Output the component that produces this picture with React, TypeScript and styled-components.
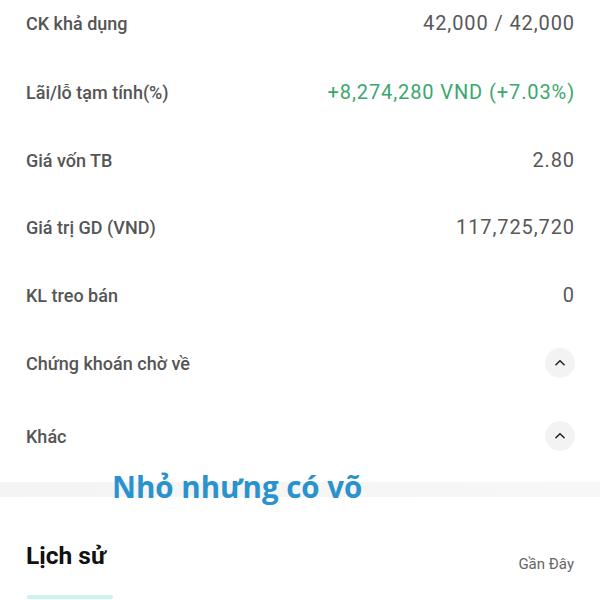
import React from 'react';
import styled, { createGlobalStyle } from 'styled-components';

const GlobalStyle = createGlobalStyle`
  html, body {
    margin: 0;
    padding: 0;
    background: #ffffff;
    overflow: hidden;
  }
  body {
    font-family: Roboto, 'Noto Sans', sans-serif;
  }
`;

const Page = styled.div`
  width: 600px;
  height: 600px;
  overflow: hidden;
  position: relative;
  background: #fff;
`;

const InfoList = styled.div`
  margin-top: -11px;
  padding: 0 26px 0 26px;
`;

const Row = styled.div<{ $h?: number }>`
  display: flex;
  align-items: center;
  justify-content: space-between;
  height: ${(p) => p.$h ?? 68}px;
`;

const Label = styled.span`
  font-size: 18px;
  font-weight: 500;
  color: #555;
`;

const Value = styled.span<{ $positive?: boolean }>`
  font-size: 20px;
  font-weight: 400;
  letter-spacing: 0.9px;
  margin-right: -1px;
  color: ${(p) => (p.$positive ? '#3aa76d' : '#585858')};
`;

const ToggleButton = styled.button`
  width: 30px;
  height: 30px;
  margin-right: -1px;
  border: none;
  border-radius: 50%;
  background: #f3f3f3;
  display: flex;
  align-items: center;
  justify-content: center;
  padding: 0;
`;

const Divider = styled.div`
  height: 15px;
  margin-top: 7px;
  background: linear-gradient(90deg, #f4f4f4, #f7f7f7);
  position: relative;
`;

const Watermark = styled.div`
  position: absolute;
  left: 112px;
  top: -16px;
  font-family: 'Open Sans', sans-serif;
  font-weight: 700;
  font-size: 29.5px;
  color: #2a92cc;
  white-space: nowrap;
`;

const HistorySection = styled.div`
  padding: 44px 26px 0 26px;
`;

const HistoryHeader = styled.div`
  display: flex;
  align-items: flex-end;
  justify-content: space-between;
`;

const HistoryTitle = styled.h2`
  margin: 0;
  font-size: 24.5px;
  font-weight: 700;
  color: #111;
`;

const RecentLink = styled.span`
  font-size: 15px;
  color: #666;
  margin-bottom: -3px;
`;

const TabIndicator = styled.div`
  width: 86px;
  height: 4px;
  margin-top: 25px;
  margin-left: 1px;
  border-radius: 2px;
  background: #c9f3ef;
`;

const ChevronUp = () => (
  <svg width="14" height="14" viewBox="0 0 24 24" fill="none" stroke="#222" strokeWidth="2.6" strokeLinecap="round" strokeLinejoin="round">
    <path d="M5 15l7-7 7 7" />
  </svg>
);

export default function App() {
  return (
    <Page>
      <GlobalStyle />
      <InfoList>
        <Row>
          <Label>CK khả dụng</Label>
          <Value>42,000 / 42,000</Value>
        </Row>
        <Row $h={70}>
          <Label>Lãi/lỗ tạm tính(%)</Label>
          <Value $positive>+8,274,280 VND (+7.03%)</Value>
        </Row>
        <Row $h={66}>
          <Label>Giá vốn TB</Label>
          <Value>2.80</Value>
        </Row>
        <Row>
          <Label>Giá trị GD (VND)</Label>
          <Value>117,725,720</Value>
        </Row>
        <Row>
          <Label>KL treo bán</Label>
          <Value>0</Value>
        </Row>
        <Row>
          <Label>Chứng khoán chờ về</Label>
          <ToggleButton>
            <ChevronUp />
          </ToggleButton>
        </Row>
        <Row $h={78}>
          <Label>Khác</Label>
          <ToggleButton>
            <ChevronUp />
          </ToggleButton>
        </Row>
      </InfoList>
      <Divider>
        <Watermark>Nhỏ nhưng có võ</Watermark>
      </Divider>
      <HistorySection>
        <HistoryHeader>
          <HistoryTitle>Lịch sử</HistoryTitle>
          <RecentLink>Gần Đây</RecentLink>
        </HistoryHeader>
        <TabIndicator />
      </HistorySection>
    </Page>
  );
}
